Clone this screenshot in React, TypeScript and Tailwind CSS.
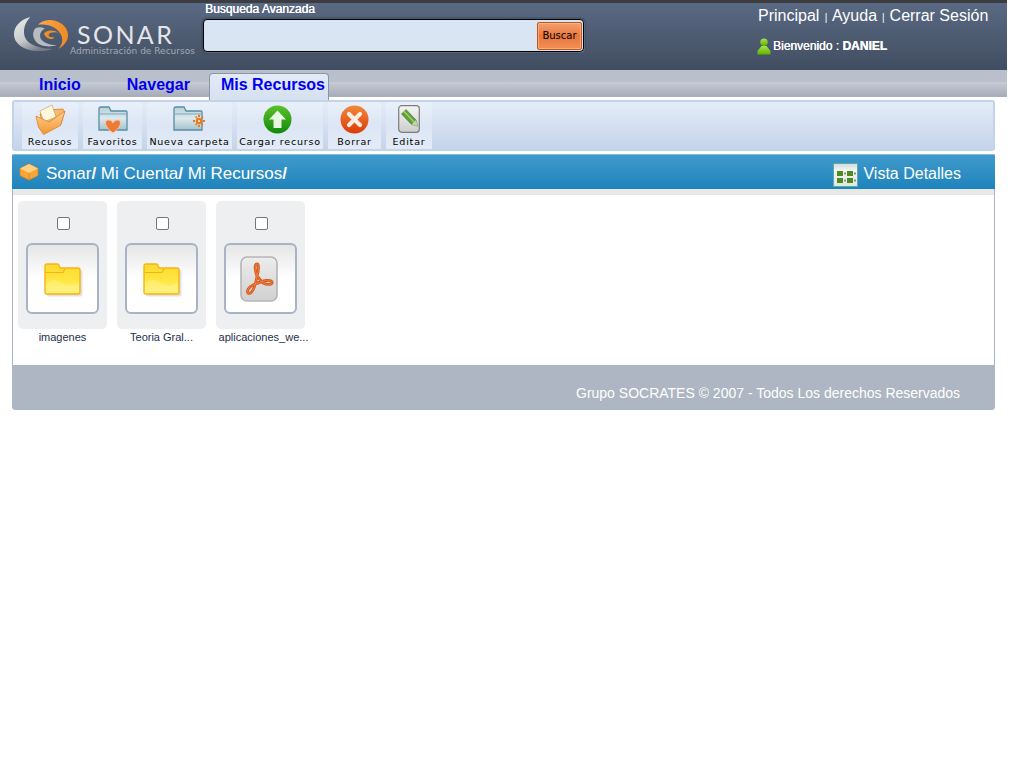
import React from "react";

const sans = "font-['Liberation_Sans',Arial,sans-serif]";

function Logo() {
  return (
    <svg width="56" height="38" viewBox="0 0 58 39" className="shrink-0">
      <defs>
        <linearGradient id="lg" x1="0" y1="0" x2="0.6" y2="1">
          <stop offset="0" stopColor="#ededed" />
          <stop offset="0.6" stopColor="#c9cacc" />
          <stop offset="1" stopColor="#767c86" />
        </linearGradient>
        <linearGradient id="lo" x1="0" y1="0" x2="1" y2="0">
          <stop offset="0" stopColor="#f9a94f" />
          <stop offset="1" stopColor="#ee8a22" />
        </linearGradient>
      </defs>
      <path d="M17 2 C6 5 0 12 0 20 C0 30 12 38 28 37 C33 37 37 36 40 35 C28 35 14 31 11 22 C9 14 12 7 17 2Z" fill="url(#lg)" />
      <path d="M25 10 C28 6 34 5 38 5 C48 6 56 12 56 21 C56 27 51 32 46 35 C50 30 51 26 49 21 C46 13 35 8 25 10Z" fill="url(#lo)" />
      <path d="M21 15 C18 21 21 28 28 31 C33 33 40 33 44 31 C37 31 31 29 28 25 C26 21 27 16 32 14 C28 12 23 12 21 15Z" fill="#b8bbc0" />
      <path d="M31 19 C34 15 41 15 46 18 C41 17 37 18 36 20 C35 22 38 23 42 23 C39 26 33 25 31 19Z" fill="#ef8e2c" />
    </svg>
  );
}

function UserIcon() {
  return (
    <svg width="14" height="17" viewBox="0 0 14 17" className="shrink-0">
      <defs>
        <linearGradient id="ug" x1="0" y1="0" x2="0" y2="1">
          <stop offset="0" stopColor="#a8e24a" />
          <stop offset="1" stopColor="#5fb000" />
        </linearGradient>
      </defs>
      <circle cx="7" cy="4.2" r="3.7" fill="url(#ug)" />
      <path d="M4.5 8 h5 L13.5 13 V16.5 H0.5 V13Z" fill="url(#ug)" />
    </svg>
  );
}

function OpenFolder() {
  return (
    <svg width="31" height="31" viewBox="0 0 31 31">
      <defs>
        <linearGradient id="of" x1="0" y1="0" x2="0" y2="1">
          <stop offset="0" stopColor="#ffd29a" />
          <stop offset="1" stopColor="#f3952d" />
        </linearGradient>
      </defs>
      <path d="M5 10 L10 6 L28 5 L29.5 8 L26 20 L10 28Z" fill="#f9b870" stroke="#d98125" strokeWidth="0.8" />
      <path d="M5 7 L17 1 L21 13 L9 18Z" fill="#fdf8dc" stroke="#c9a468" strokeWidth="0.7" />
      <path d="M1 12 L14 18 L30 7 L25.5 21.5 L8.5 30.5 L3.5 23Z" fill="url(#of)" stroke="#d98125" strokeWidth="0.8" strokeLinejoin="round" />
    </svg>
  );
}

function TealFolder({ id, children }: { id: string; children?: React.ReactNode }) {
  return (
    <svg width="30" height="29" viewBox="0 0 30 29" className="overflow-visible">
      <defs>
        <linearGradient id={id} x1="0" y1="0" x2="0" y2="1">
          <stop offset="0" stopColor="#b7d1da" />
          <stop offset="0.5" stopColor="#dbe8ec" />
          <stop offset="1" stopColor="#a4c3ce" />
        </linearGradient>
      </defs>
      <path d="M1 4 Q1 2 3 2 H11 L13 6 H28 Q29 6 29 7 V25 H1Z" fill={`url(#${id})`} stroke="#5a8da1" strokeWidth="1.3" />
      <path d="M1.5 9 H28.5" stroke="#7ea9b9" strokeWidth="1" />
      {children}
    </svg>
  );
}

function CircleIcon({ id, from, to, children }: { id: string; from: string; to: string; children: React.ReactNode }) {
  return (
    <svg width="29" height="29" viewBox="0 0 29 29">
      <defs>
        <linearGradient id={id} x1="0" y1="0" x2="0" y2="1">
          <stop offset="0" stopColor={from} />
          <stop offset="1" stopColor={to} />
        </linearGradient>
      </defs>
      <circle cx="14.5" cy="14.5" r="14" fill={`url(#${id})`} />
      {children}
    </svg>
  );
}

function EditIcon() {
  return (
    <svg width="22" height="28" viewBox="0 0 22 28">
      <defs>
        <linearGradient id="ed" x1="0" y1="0" x2="0" y2="1">
          <stop offset="0" stopColor="#f5f5f5" />
          <stop offset="1" stopColor="#cdcdcd" />
        </linearGradient>
      </defs>
      <rect x="0.7" y="0.7" width="20.6" height="26.6" rx="3" fill="url(#ed)" stroke="#7d7d7d" strokeWidth="1.2" />
      <path d="M3.5 9 L8 4.5 L18 15 L19.5 21 L13.5 19.5Z" fill="#5f9f3a" stroke="#487f2b" strokeWidth="0.6" />
      <path d="M6 6.5 L16 17" stroke="#a2d074" strokeWidth="1.5" />
      <path d="M13.5 19.5 L19.5 21 L18 15" fill="#c3d6a8" />
    </svg>
  );
}

function YellowFolder({ id }: { id: string }) {
  return (
    <svg width="39" height="36" viewBox="0 0 39 36" className="mt-[2px] ml-[2px]">
      <defs>
        <linearGradient id={id} x1="0" y1="0" x2="0" y2="1">
          <stop offset="0" stopColor="#ffd92e" />
          <stop offset="0.5" stopColor="#ffe53f" />
          <stop offset="1" stopColor="#fff27a" />
        </linearGradient>
      </defs>
      <rect x="3" y="8" width="35.5" height="26.5" rx="2" fill="#cfcfcf" opacity="0.6" />
      <path d="M1 4 Q1 2 3 2 H13 Q15 2 15 4 L16 6 H34 Q36 6 36 8 V30 Q36 32 34 32 H3 Q1 32 1 30Z" fill={`url(#${id})`} stroke="#f5b416" strokeWidth="1.4" />
      <path d="M1.5 10.5 H19 L21 7" fill="none" stroke="#f5b416" strokeWidth="1.2" />
      <path d="M2 21 Q10 15 18 21 T35 20 V29 H2Z" fill="#fff7ae" opacity="0.3" />
    </svg>
  );
}

function PdfIcon() {
  const d =
    "M17 8 C14 8 15 15 17 20 L23 27 C27 29 33 29 32 26 C31 23 24 24 13 29 C9 31 6 35 8 37 C11 39 15 33 17 20 C19 14 19 8 17 8Z";
  return (
    <svg width="38" height="46" viewBox="0 0 38 46" className="-ml-[3px]">
      <defs>
        <linearGradient id="pf" x1="0" y1="0" x2="0" y2="1">
          <stop offset="0" stopColor="#ededed" />
          <stop offset="1" stopColor="#d0d0d0" />
        </linearGradient>
      </defs>
      <rect x="1" y="1" width="36" height="44" rx="6" fill="url(#pf)" stroke="#b5b5b5" strokeWidth="1.6" />
      <path d={d} fill="none" stroke="#d95a1c" strokeWidth="2.8" strokeLinejoin="round" />
      <path d={d} fill="none" stroke="#f08d55" strokeWidth="0.7" strokeLinejoin="round" />
    </svg>
  );
}

function ToolItem({ w, label, children }: { w: string; label: string; children: React.ReactNode }) {
  return (
    <div className={`${w} h-full flex flex-col items-center bg-gradient-to-b from-[#e9f0fa] via-[#dce6f4] to-[#e3ebf7]`}>
      <div className="h-[32px] flex items-center justify-center mt-[1px]">{children}</div>
      <div className="font-['DejaVu_Sans',sans-serif] text-[9.5px] leading-[12px] tracking-[0.8px] text-black whitespace-nowrap mt-[1px]">{label}</div>
    </div>
  );
}

function FileCard({ label, labelClass, children }: { label: string; labelClass?: string; children: React.ReactNode }) {
  return (
    <div className="w-[89px] flex flex-col items-center">
      <div className="w-[89px] h-[128px] rounded-[5px] bg-[#eeeff1] flex flex-col items-center pt-[16px]">
        <div className="ml-[2px] w-[13px] h-[13px] rounded-[2px] border border-[#767676] bg-white" />
        <div className="mt-[13px] w-[73px] h-[71px] rounded-[6px] border-2 border-[#a9b3c6] bg-gradient-to-b from-[#e6e6e6] via-white to-white flex items-center justify-center">
          {children}
        </div>
      </div>
      <div className={`${sans} ${labelClass ?? ""} mt-[2px] text-[11px] leading-[13px] text-[#22304a] whitespace-nowrap`}>{label}</div>
    </div>
  );
}

export default function App() {
  return (
    <div className={`${sans} w-[1024px] min-h-[768px] bg-white`}>
      <header className="w-[1007px] h-[70px] border-t-[3px] border-[#3d3d40] bg-gradient-to-b from-[#5a6a84] to-[#414d60] flex">
        <div className="w-[203px] pl-[14px] pt-[12px] flex shrink-0">
          <Logo />
          <div className="pt-[9px]">
            <div className="font-['Lato',sans-serif] text-[25px] leading-[20px] tracking-[2.4px] text-[#e4e6ea] ml-[7px]">SONAR</div>
            <div className="font-['DejaVu_Sans',sans-serif] text-[9px] leading-[11px] text-[#a3aab5] mt-[2px] whitespace-nowrap">Administración de Recursos</div>
          </div>
        </div>
        <div className="w-[381px] shrink-0">
          <div className="text-[12px] leading-[13px] text-white pl-[2px] [text-shadow:0.4px_0_0_#fff]">Busqueda Avanzada</div>
          <div className="mt-[3px] h-[33px] rounded-[4px] border border-black bg-[#d9e5f3] flex justify-end items-center pr-[1px] shadow-[1px_1px_0_#5e6a7c,0_0_0_2px_rgba(60,70,85,0.45)]">
            <button className="w-[45px] h-[28px] rounded-[2px] border border-[#c4521a] bg-gradient-to-b from-[#f4a070] via-[#e9763a] to-[#f19058] shadow-[inset_0_0_0_1px_rgba(255,200,160,0.55)] font-['DejaVu_Sans',sans-serif] text-[10px] text-black">Buscar</button>
          </div>
        </div>
        <div className="ml-[174px] pt-[4px]">
          <div className="text-[16px] leading-[18px] text-white whitespace-nowrap">
            Principal <span className="text-[10px] mx-[1px]">|</span> Ayuda <span className="text-[10px] mx-[0.5px]">|</span> Cerrar Sesión
          </div>
          <div className="mt-[11px] flex items-center gap-[2px] -ml-[1px] text-[12px] leading-[17px] text-white whitespace-nowrap">
            <UserIcon />
            <span className="[text-shadow:0.3px_0_0_#fff]">Bienvenido : <b>DANIEL</b></span>
          </div>
        </div>
      </header>

      <nav className="w-[1007px] h-[27px] relative bg-[#b9c0cc]">
        <div className="absolute left-0 right-0 top-[12px] h-[15px] bg-gradient-to-b from-[#c6cbd5] to-[#a7adb9] border-b border-[#aab0bb]" />
        <div className="relative flex h-full text-[16px] font-bold text-[#0000ee]">
          <div className="ml-[39px] pt-[5px] leading-[19px]">Inicio</div>
          <div className="ml-[46px] pt-[5px] leading-[19px]">Navegar</div>
          <div className="ml-[19px] mt-[3px] h-[27px] w-[120px] rounded-t-[4px] border border-b-0 border-[#8b95a8] bg-gradient-to-b from-[#e3ebf7] to-[#d5e0f0] pl-[11px] pt-[1px] leading-[19px] z-10">Mis Recursos</div>
        </div>
      </nav>

      <div className="ml-[12px] mt-[3px] w-[983px] h-[51px] rounded-[3px] border-2 border-[#c3d3e8] bg-gradient-to-b from-[#e4ecf8] to-[#c5d4ea] flex gap-[5px] pl-[8px]">
        <ToolItem w="w-[56px]" label="Recusos"><OpenFolder /></ToolItem>
        <ToolItem w="w-[59px]" label="Favoritos">
          <TealFolder id="tf1">
            <path d="M15 28 C6 22 6 15 10.5 15 C13 15 14.5 16.5 15 18 C15.5 16.5 17 15 19.5 15 C24 15 24 22 15 28Z" fill="#ee7a38" stroke="#f9c7a0" strokeWidth="1" />
          </TealFolder>
        </ToolItem>
        <ToolItem w="w-[85px]" label="Nueva carpeta">
          <div className="-ml-[3px]">
            <TealFolder id="tf2">
              <g fill="#e8791e">
                <circle cx="26" cy="16" r="3.2" />
                <path d="M25 10h2v2h-2zM25 20h2v2h-2zM20 15h2v2h-2zM30 15h2v2h-2zM22 12l1.5-1 1 1.5-1.5 1zM28 19l1.5-1 1 1.5-1.5 1zM29.5 11l1 1.5-1.5 1-1-1.5zM23.5 18l1 1.5-1.5 1-1-1.5z" />
              </g>
              <circle cx="26" cy="16" r="1.2" fill="#ffd9a0" />
            </TealFolder>
          </div>
        </ToolItem>
        <ToolItem w="w-[86px]" label="Cargar recurso">
          <div className="-ml-[6px]">
            <CircleIcon id="cg" from="#5cc02a" to="#0e8a08">
              <path d="M14.5 5.5 L23 14.5 H18.5 V23 H10.5 V14.5 H6Z" fill="#eaf6e4" />
            </CircleIcon>
          </div>
        </ToolItem>
        <ToolItem w="w-[53px]" label="Borrar">
          <CircleIcon id="br" from="#f08a3c" to="#dd3a05">
            <path d="M9 9 L20 20 M20 9 L9 20" stroke="#fbeee4" strokeWidth="4.2" strokeLinecap="round" />
          </CircleIcon>
        </ToolItem>
        <ToolItem w="w-[46px]" label="Editar"><EditIcon /></ToolItem>
      </div>

      <main className="ml-[12px] mt-[3px] w-[983px] rounded-b-[4px] border-x border-[#aab4c6]">
        <div className="h-[35px] rounded-t-[2px] border-t border-[#7fbde0] bg-gradient-to-b from-[#3f9acb] to-[#1c83bc] flex items-center pl-[7px] pr-[34px] -mx-[1px]">
          <svg width="20" height="18" viewBox="0 0 22 20" className="shrink-0">
            <path d="M11 1 L21 6 V14 L11 19 L1 14 V6Z" fill="#f7a63a" stroke="#d98215" strokeWidth="0.8" />
            <path d="M1 6 L11 11 L21 6 L11 1Z" fill="#ffd083" />
            <path d="M11 11 V19" stroke="#d98215" strokeWidth="0.8" />
          </svg>
          <div className="ml-[7px] mt-[3px] text-[17px] leading-[19px] text-white whitespace-nowrap">Sonar<b>/</b> Mi Cuenta<b>/</b> Mi Recursos<b>/</b></div>
          <div className="ml-auto mt-[2px] flex items-center">
            <svg width="25" height="24" viewBox="0 0 25 24" className="shrink-0 mt-[4px]">
              <defs>
                <linearGradient id="vd" x1="0" y1="0" x2="0" y2="1">
                  <stop offset="0" stopColor="#cfdcdc" />
                  <stop offset="0.3" stopColor="#f2f4f2" />
                  <stop offset="1" stopColor="#dfe6df" />
                </linearGradient>
              </defs>
              <rect x="0.5" y="0.5" width="24" height="23" fill="url(#vd)" stroke="#5ba9a8" />
              <path d="M4 8h6v5H4zM14 8h6v5h-6zM4 15h6v5H4zM14 15h6v5h-6z" fill="#4d8a1f" />
              <path d="M11 9.5h2v2h-2zM21 9.5h2v2h-2zM11 16.5h2v2h-2zM21 16.5h2v2h-2z" fill="#8a938a" />
            </svg>
            <span className="ml-[5px] text-[16px] leading-[19px] text-white whitespace-nowrap">Vista Detalles</span>
          </div>
        </div>
        <div className="h-[6px] bg-[#e8e8e8]" />
        <div className="h-[170px] bg-white flex items-start gap-[10px] pl-[5px] pt-[6px]">
          <FileCard label="imagenes"><YellowFolder id="yf1" /></FileCard>
          <FileCard label="Teoria Gral..."><YellowFolder id="yf2" /></FileCard>
          <FileCard label="aplicaciones_we..." labelClass="ml-[6px]"><PdfIcon /></FileCard>
        </div>
        <div className="h-[45px] -mx-[1px] rounded-b-[4px] bg-[#adb6c2] text-[14px] leading-[16px] text-white pl-[564px] pt-[20px] whitespace-nowrap">
          Grupo SOCRATES © 2007 - Todos Los derechos Reservados
        </div>
      </main>
    </div>
  );
}
